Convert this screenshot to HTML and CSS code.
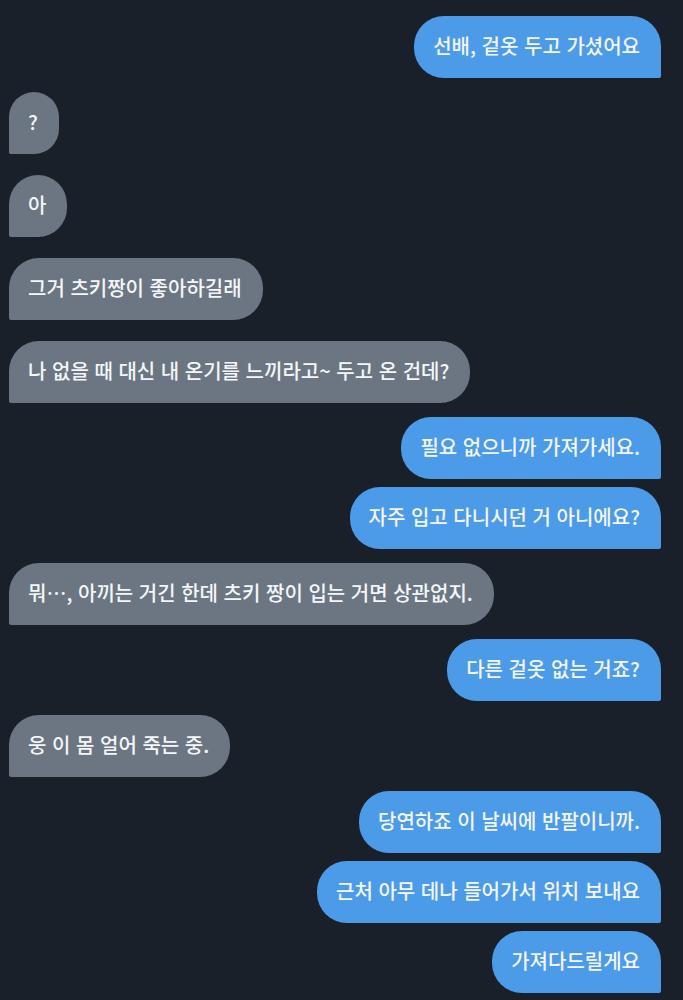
FILE: index.html
```html
<!DOCTYPE html>
<html lang="ko">
<head>
    <meta charset="UTF-8">
    <meta name="viewport" content="width=device-width, initial-scale=1.0">
    <title>Chat</title>
    <link rel="stylesheet" href="styles.css">
</head>
<body>
    <div class="chat">
        <div class="msg me">선배, 겉옷 두고 가셨어요</div>
        <div class="msg them">?</div>
        <div class="msg them">아</div>
        <div class="msg them">그거 츠키짱이 좋아하길래</div>
        <div class="msg them">나 없을 때 대신 내 온기를 느끼라고~ 두고 온 건데?</div>
        <div class="msg me">필요 없으니까 가져가세요.</div>
        <div class="msg me">자주 입고 다니시던 거 아니에요?</div>
        <div class="msg them">뭐…, 아끼는 거긴 한데 츠키 짱이 입는 거면 상관없지.</div>
        <div class="msg me">다른 겉옷 없는 거죠?</div>
        <div class="msg them">웅 이 몸 얼어 죽는 중.</div>
        <div class="msg me">당연하죠 이 날씨에 반팔이니까.</div>
        <div class="msg me">근처 아무 데나 들어가서 위치 보내요</div>
        <div class="msg me">가져다드릴게요</div>
    </div>
</body>
</html>
```

FILE: styles.css
```css
body {
    margin: 0;
    padding: 0;
    background-color: #19202a;
    font-family: "Noto Sans CJK KR", Roboto, sans-serif;
}
.chat {
    display: flex;
    flex-direction: column;
    padding: 16px 22px 0 9px;
    height: 1000px;
    box-sizing: border-box;
    overflow: hidden;
}
.msg {
    font-size: 20px;
    font-weight: 500;
    line-height: 30px;
    padding: 15px 21px 17px 19px;
    color: #f4f6f9;
    border-radius: 30px;
    white-space: nowrap;
    margin-top: 14px;
}
.msg:first-child {
    margin-top: 0;
}
.me {
    align-self: flex-end;
    background-color: #4b9be9;
    border-bottom-right-radius: 2px;
}
.them {
    align-self: flex-start;
    background-color: #6b7682;
    border-bottom-left-radius: 2px;
}
.me + .me {
    margin-top: 8px;
}
.them + .them {
    margin-top: 21px;
}
```
